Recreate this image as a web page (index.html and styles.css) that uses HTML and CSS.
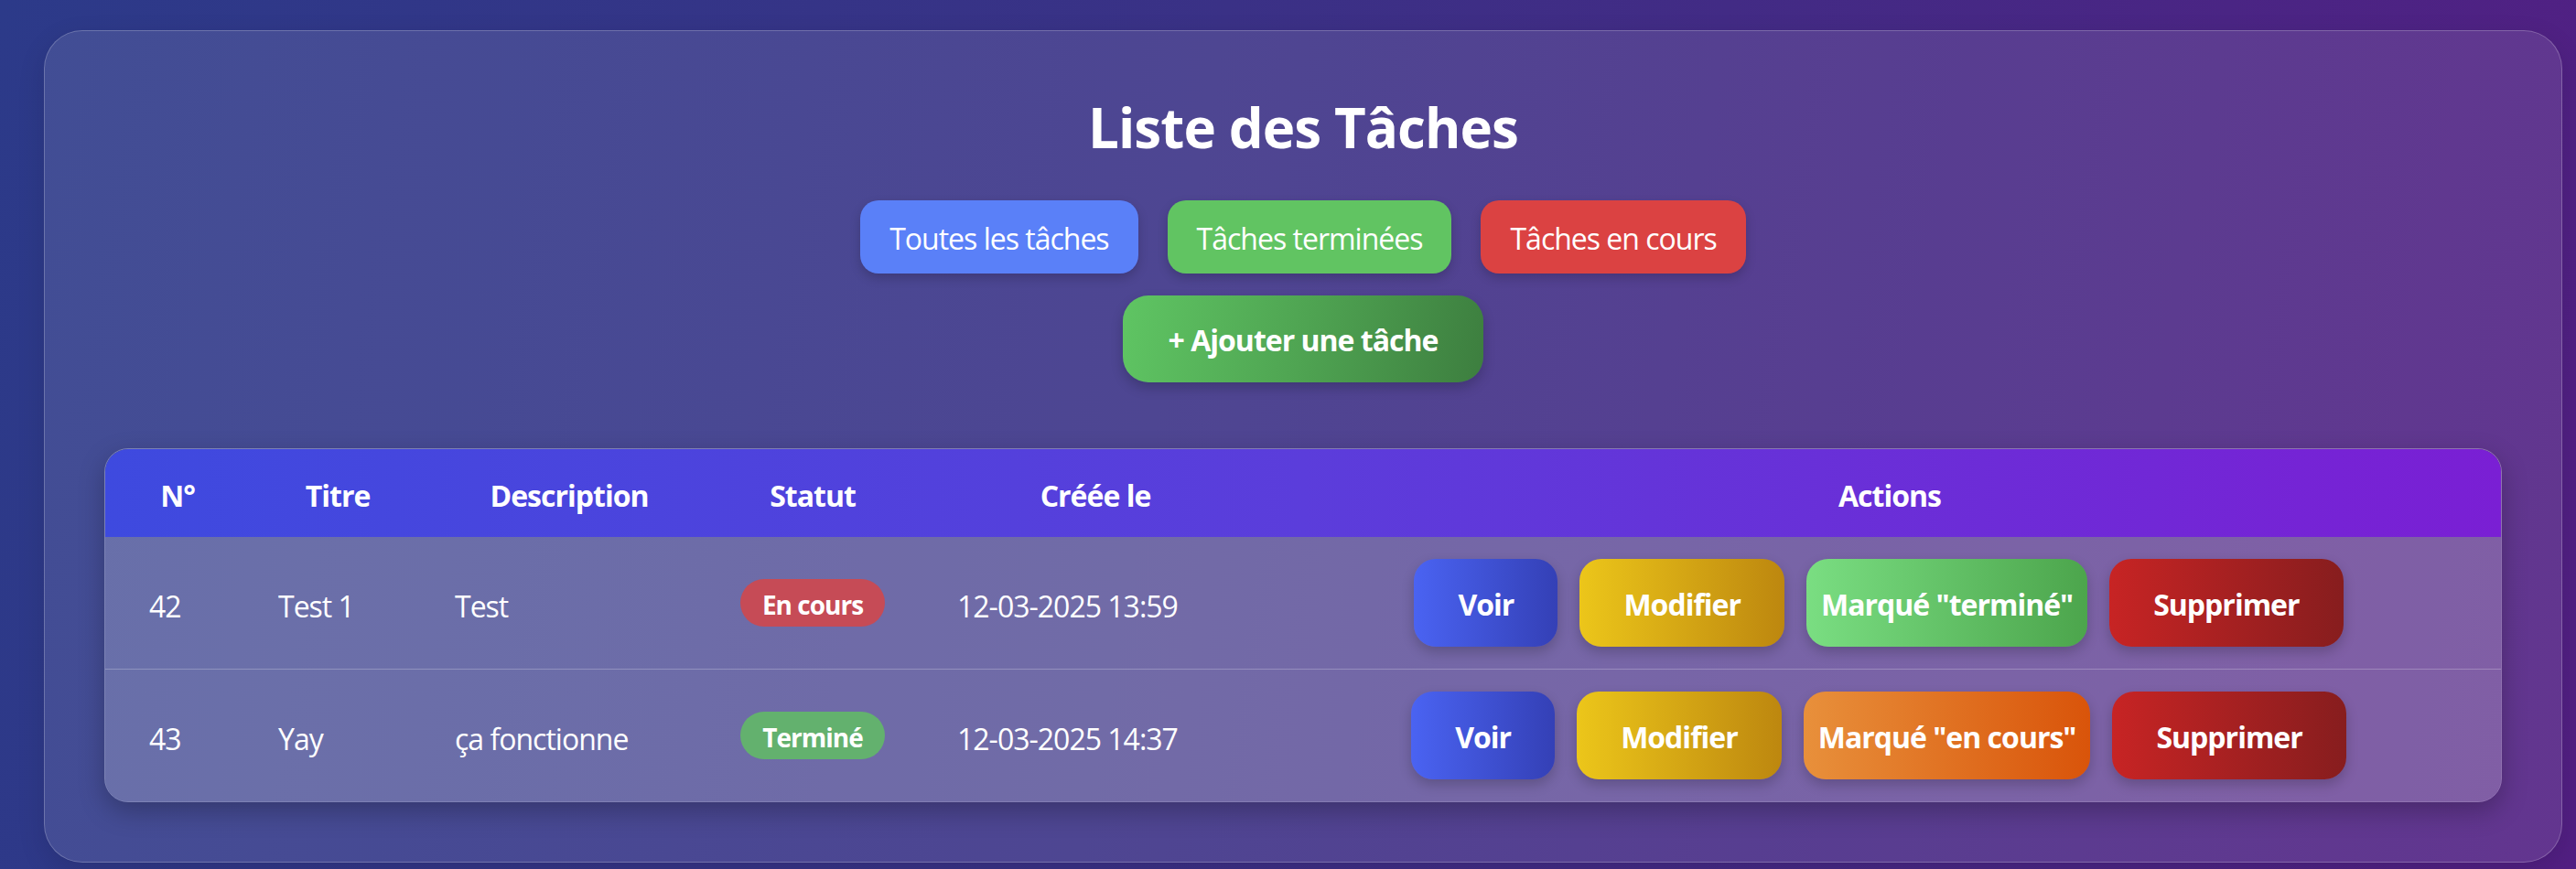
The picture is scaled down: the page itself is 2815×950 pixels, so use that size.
FILE: index.html
```html
<!DOCTYPE html>
<html lang="fr">
<head>
<meta charset="utf-8">
<title>Liste des Tâches</title>
<link rel="stylesheet" href="styles.css">
</head>
<body>
<main class="card">
  <h1 class="title">Liste des Tâches</h1>
  <nav class="filters">
    <a class="filter filter-all">Toutes les tâches</a>
    <a class="filter filter-done">Tâches terminées</a>
    <a class="filter filter-progress">Tâches en cours</a>
  </nav>
  <div class="add-row"><a class="btn-add">+ Ajouter une tâche</a></div>
  <div class="table-wrap">
    <table class="tasks">
      <colgroup>
        <col class="col-id"><col class="col-title"><col class="col-desc"><col class="col-status"><col class="col-date"><col class="col-actions">
      </colgroup>
      <thead>
        <tr><th>N°</th><th>Titre</th><th>Description</th><th>Statut</th><th>Créée le</th><th>Actions</th></tr>
      </thead>
      <tbody>
        <tr>
          <td class="c-id">42</td>
          <td class="c-title">Test 1</td>
          <td class="c-desc">Test</td>
          <td class="c-status"><span class="badge badge-progress">En cours</span></td>
          <td class="c-date">12-03-2025 13:59</td>
          <td class="c-actions"><div class="actions">
            <a class="act act-view">Voir</a>
            <a class="act act-edit">Modifier</a>
            <a class="act act-mark act-done">Marqué "terminé"</a>
            <a class="act act-delete">Supprimer</a>
          </div></td>
        </tr>
        <tr>
          <td class="c-id">43</td>
          <td class="c-title">Yay</td>
          <td class="c-desc">ça fonctionne</td>
          <td class="c-status"><span class="badge badge-done">Terminé</span></td>
          <td class="c-date">12-03-2025 14:37</td>
          <td class="c-actions"><div class="actions">
            <a class="act act-view">Voir</a>
            <a class="act act-edit">Modifier</a>
            <a class="act act-mark act-progress">Marqué "en cours"</a>
            <a class="act act-delete">Supprimer</a>
          </div></td>
        </tr>
      </tbody>
    </table>
  </div>
</main>
</body>
</html>
```

FILE: styles.css
```css
* { box-sizing: border-box; }

html, body { height: 100%; }

body {
  margin: 0;
  padding: 33px 15px 0 48px;
  min-height: 950px;
  font-family: "Open Sans", "Noto Sans", sans-serif;
  letter-spacing: -1px;
  color: #ffffff;
  background: linear-gradient(100deg, #2c3a89 0%, #3a3186 45%, #521f83 100%);
  overflow: hidden;
}

.card {
  border: 1px solid rgba(255, 255, 255, 0.22);
  border-radius: 42px;
  background: rgba(255, 255, 255, 0.1);
  padding: 66px 65px 65px;
  box-shadow: 0 10px 30px rgba(0, 0, 0, 0.12);
}

.title {
  margin: 0 0 44px;
  padding-top: 3px;
  text-align: center;
  font-size: 60px;
  line-height: 72px;
  font-weight: 700;
  letter-spacing: -0.9px;
}

.filters {
  display: flex;
  justify-content: center;
  gap: 32px;
  margin-bottom: 24px;
}

.filter {
  display: block;
  padding: 18px 32px 14px;
  font-size: 32px;
  line-height: 48px;
  border-radius: 20px;
  color: #fff;
  box-shadow: 0 5px 12px rgba(0, 0, 0, 0.18);
}

.filter-all { background: #5a80f8; }
.filter-done { background: #61c462; }
.filter-progress { background: #db4242; }

.add-row {
  display: flex;
  justify-content: center;
  margin-bottom: 72px;
}

.btn-add {
  display: block;
  padding: 25px 50px 22px;
  font-size: 32px;
  line-height: 48px;
  font-weight: 700;
  border-radius: 28px;
  background: linear-gradient(100deg, #5fc563 0%, #4fa452 50%, #3d7e3f 100%);
  box-shadow: 0 6px 14px rgba(0, 0, 0, 0.2);
}

.table-wrap {
  border: 1px solid rgba(255, 255, 255, 0.3);
  border-radius: 26px;
  overflow: hidden;
  box-shadow: 0 10px 28px rgba(0, 0, 0, 0.25);
}

.tasks {
  width: 100%;
  border-collapse: collapse;
  table-layout: fixed;
}

.col-id { width: 158px; }
.col-title { width: 192px; }
.col-desc { width: 314px; }
.col-status { width: 218px; }
.col-date { width: 400px; }

.tasks thead tr {
  background: linear-gradient(90deg, #3e4adf 0%, #5b3ddb 50%, #7a1fd4 100%);
}

.tasks th {
  padding: 27px 8px 21px;
  font-size: 32px;
  line-height: 48px;
  font-weight: 700;
  text-align: center;
}

.tasks tbody tr {
  background: rgba(255, 255, 255, 0.2);
}

.tasks tbody tr + tr {
  border-top: 1px solid rgba(255, 255, 255, 0.25);
}

.tasks td {
  padding: 28px 8px 20px;
  font-size: 32px;
  line-height: 48px;
  vertical-align: middle;
  white-space: nowrap;
}

.tasks td.c-id { padding-left: 48px; }
.tasks td.c-title { padding-left: 31px; }
.tasks td.c-desc { padding-left: 32px; }
.tasks td.c-status { text-align: center; padding-top: 24px; padding-bottom: 24px; }
.tasks td.c-date { padding-left: 49px; }
.tasks td.c-actions { padding-top: 24px; padding-bottom: 24px; }

.badge {
  display: inline-block;
  padding: 10px 24px 6px;
  font-size: 28px;
  line-height: 36px;
  font-weight: 700;
  border-radius: 999px;
}

.badge-progress { background: #c64b56; }
.badge-done { background: #63b16e; }

.actions {
  display: flex;
  justify-content: center;
  gap: 24px;
  padding-right: 24px;
}

.act {
  display: block;
  padding: 26px 48px 22px;
  font-size: 32px;
  line-height: 48px;
  font-weight: 700;
  border-radius: 24px;
  box-shadow: 0 6px 14px rgba(0, 0, 0, 0.2);
}

.act-mark { padding-left: 16px; padding-right: 16px; }

.act-view { background: linear-gradient(90deg, #4a63f2, #3440b6); }
.act-edit { background: linear-gradient(90deg, #ecc61a, #bd870f); }
.act-done { background: linear-gradient(90deg, #7ade82, #4ca54c); }
.act-progress { background: linear-gradient(90deg, #e8903b, #d9540a); }
.act-delete { background: linear-gradient(90deg, #c72424, #871d1e); }
```
